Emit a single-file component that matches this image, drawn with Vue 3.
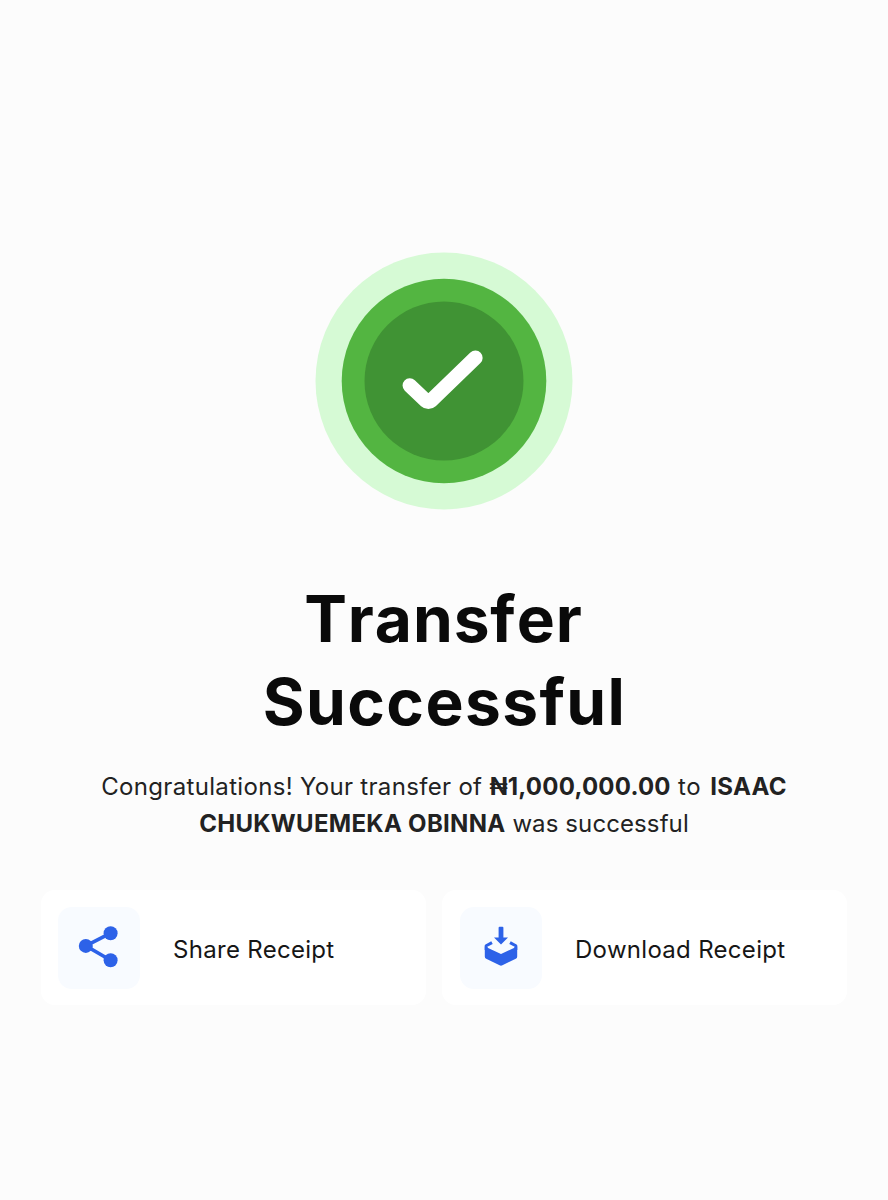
<template>
  <div class="page">
    <!-- Success badge -->
    <svg class="badge" viewBox="0 0 258 258" aria-hidden="true">
      <circle cx="129" cy="129" r="128.5" fill="#d6fad5" />
      <circle cx="129" cy="129" r="102.3" fill="#53b541" />
      <circle cx="129" cy="129" r="79.5" fill="#409334" />
      <path d="M94.8 133.4L110.6 148.5Q113.4 151 116.2 148.5L160.4 105.8" />
    </svg>

    <h1>
      <span class="line-one">Transfer</span><br />
      <span>Successful</span>
    </h1>

    <p class="message">
      <span class="intro">Congratulations! Your transfer of</span>
      {{ " " }}
      <strong class="amount">{{ amount }}</strong>
      <span class="to"> to </span>
      <strong>{{ firstName }}</strong>
      <br />
      <strong>{{ lastName }}</strong>
      <span class="outro"> was successful</span>
    </p>

    <!-- Receipt actions -->
    <div class="actions">
      <button type="button" class="share">
        <span class="tile">
          <svg width="42" height="44" viewBox="0 0 42 44" aria-hidden="true">
            <path class="link" d="M32.6 8.2L7.8 20.9L32.6 35.2" />
            <circle cx="32.6" cy="8.2" r="7" />
            <circle cx="7.8" cy="20.9" r="7" />
            <circle cx="32.6" cy="35.2" r="7" />
          </svg>
        </span>
        <span class="label">Share Receipt</span>
      </button>

      <button type="button" class="download">
        <span class="tile">
          <svg width="42" height="44" viewBox="0 0 42 44" aria-hidden="true">
            <path d="M18.6 2.8Q18.6 1.8 19.6 1.8H22.4Q23.4 1.8 23.4 2.8V12.4H28L21 19.6L14 12.4H18.6Z" />
            <path class="rim" d="M12 17.6L6.2 20.8V25M30 17.6L35.8 20.8V25" />
            <path d="M4.8 21.5L7 22.4L21 29L35 22.4L37.2 21.5V31.4Q37.2 33 35.8 33.8L22.4 40.3Q21 41 19.6 40.3L6.2 33.8Q4.8 33 4.8 31.4Z" />
          </svg>
        </span>
        <span class="label">Download Receipt</span>
      </button>
    </div>
  </div>
</template>

<script setup>
import { ref } from "vue";

const amount = ref("₦1,000,000.00");
const firstName = ref("ISAAC");
const lastName = ref("CHUKWUEMEKA OBINNA");
</script>

<style>
body {
  margin: 0;
  background: #fcfcfc;
}
</style>

<style scoped>
* {
  box-sizing: border-box;
  font-family: "Inter", "Liberation Sans", sans-serif;
}

.page {
  min-height: 1200px;
  padding: 252px 41px 0;
  display: flex;
  flex-direction: column;
  align-items: center;
  background: #fcfcfc;
}

.badge {
  width: 258px;
  height: 258px;
}

.badge path {
  fill: none;
  stroke: #fff;
  stroke-width: 14.5;
  stroke-linecap: round;
  stroke-linejoin: round;
}

h1 {
  margin: 68px 0 0;
  padding-left: 1px;
  font-size: 64px;
  font-weight: 700;
  line-height: 82.5px;
  letter-spacing: 1.4px;
  text-align: center;
  color: #0a0a0a;
}

.line-one {
  margin-right: 2px;
  font-kerning: none;
  letter-spacing: 0.9px;
}

.message {
  margin: 25px 0 0;
  font-size: 24px;
  line-height: 37px;
  letter-spacing: 0.3px;
  text-align: center;
  white-space: nowrap;
  color: #222;
}

.intro {
  letter-spacing: 0.32px;
}

.amount {
  letter-spacing: 0.22px;
}

.to {
  margin-right: 1.5px;
  letter-spacing: 0.6px;
}

.outro {
  letter-spacing: 0.1px;
}

strong {
  font-weight: 700;
}

/* Action cards */
.actions {
  width: 100%;
  margin-top: 48px;
  display: flex;
  gap: 16px;
}

button {
  height: 115px;
  padding: 0 17px;
  display: flex;
  align-items: center;
  gap: 33px;
  border: none;
  border-radius: 14px;
  background: #fff;
  color: #161616;
  cursor: pointer;
}

.share {
  width: 385px;
}

.download {
  flex: 1;
  padding-left: 18px;
}

.tile {
  width: 82px;
  height: 82px;
  padding-bottom: 2px;
  display: flex;
  align-items: center;
  justify-content: center;
  border-radius: 14px;
  background: #f8fbff;
}

.tile svg {
  fill: #2d62e8;
}

.link,
.rim {
  fill: none;
  stroke: #2d62e8;
  stroke-width: 3.6;
}

.rim {
  stroke-width: 3;
  stroke-linejoin: round;
}

.label {
  padding-top: 3px;
  font-size: 24px;
  letter-spacing: 0.3px;
  white-space: nowrap;
}
</style>
